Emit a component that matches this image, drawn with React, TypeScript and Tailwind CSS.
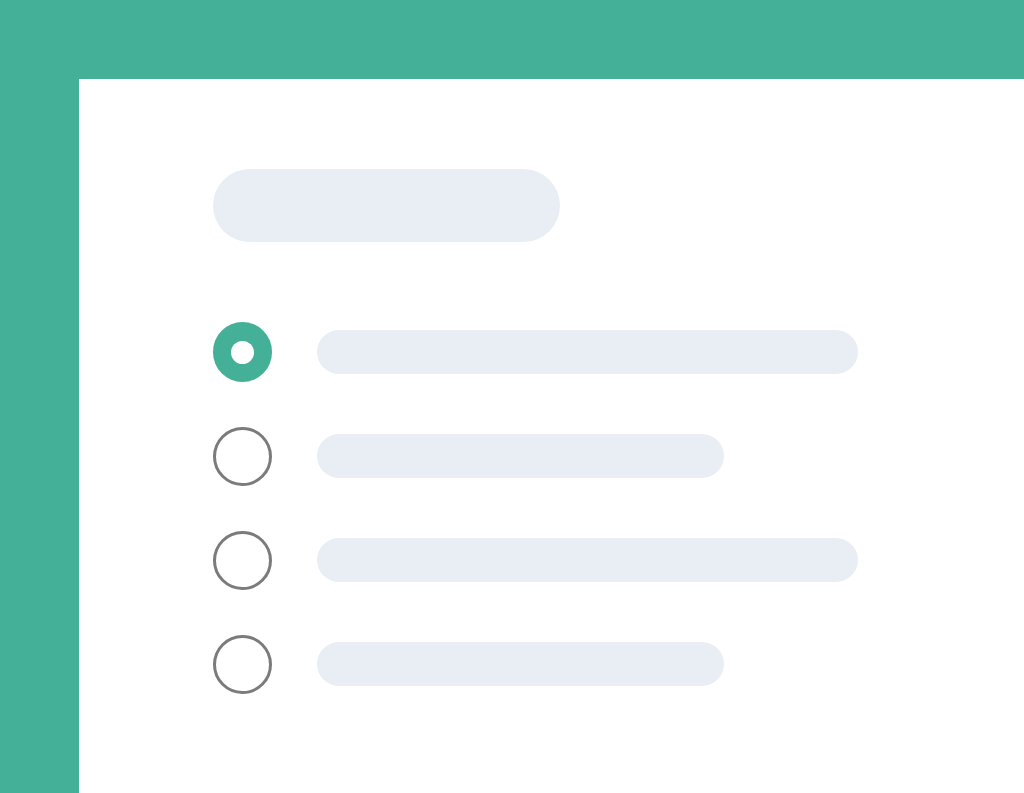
const rows = [
  { checked: true, width: "w-[541px]" },
  { checked: false, width: "w-[407px]" },
  { checked: false, width: "w-[541px]" },
  { checked: false, width: "w-[407px]" },
];

function Radio({ checked }: { checked: boolean }) {
  if (checked) {
    return (
      <div className="flex h-[60px] w-[59px] shrink-0 items-center justify-center rounded-full bg-[#45b098]">
        <div className="h-[23px] w-[23px] rounded-full bg-white" />
      </div>
    );
  }
  return (
    <div className="h-[59px] w-[59px] shrink-0 rounded-full border-[3px] border-[#7b7b7b]" />
  );
}

export default function App() {
  return (
    <div className="flex h-[793px] w-full bg-[#45b098] pl-[79px] pt-[79px]">
      <div className="flex-1 bg-white pl-[134px] pt-[90px]">
        <div className="h-[73px] w-[347px] rounded-full bg-[#e9eef4]" />
        <div className="mt-[80px] flex flex-col gap-[44px]">
          {rows.map((row, i) => (
            <div key={i} className="flex h-[60px] items-center gap-[45px]">
              <Radio checked={row.checked} />
              <div className={`h-[44px] ${row.width} rounded-full bg-[#e9eef4]`} />
            </div>
          ))}
        </div>
      </div>
    </div>
  );
}
